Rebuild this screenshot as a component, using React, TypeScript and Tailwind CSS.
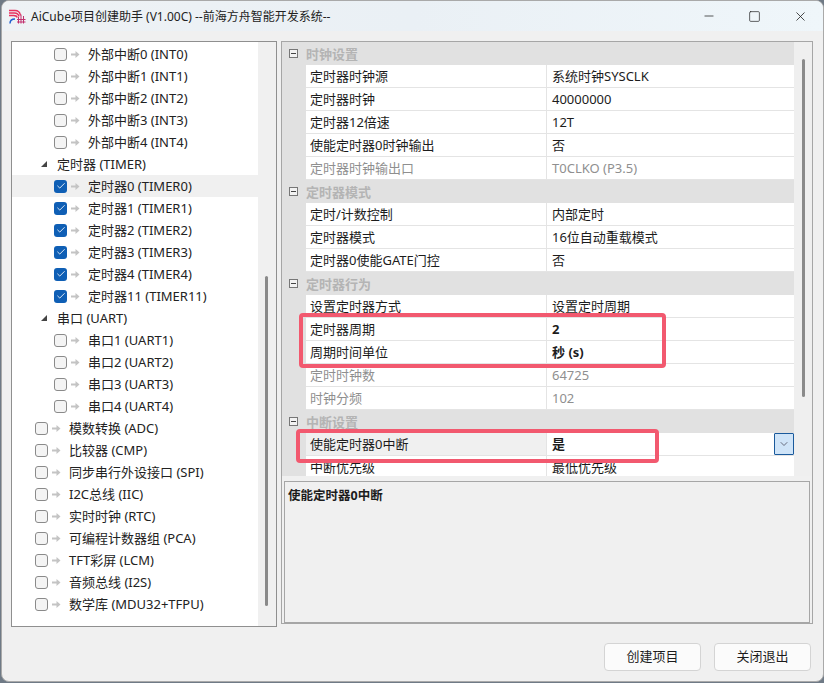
import { Check, Minus, Square, X, ChevronDown } from 'lucide-react';

const font = { fontFamily: '"Noto Sans", "Noto Sans CJK SC", sans-serif' };

type TreeItem = {
  label: string;
  level: 0 | 1 | 2;
  checked?: boolean;
  group?: boolean;
  active?: boolean;
};

const treeItems: TreeItem[] = [
  { label: '外部中断0 (INT0)', level: 2 },
  { label: '外部中断1 (INT1)', level: 2 },
  { label: '外部中断2 (INT2)', level: 2 },
  { label: '外部中断3 (INT3)', level: 2 },
  { label: '外部中断4 (INT4)', level: 2 },
  { label: '定时器 (TIMER)', level: 1, group: true },
  { label: '定时器0 (TIMER0)', level: 2, checked: true, active: true },
  { label: '定时器1 (TIMER1)', level: 2, checked: true },
  { label: '定时器2 (TIMER2)', level: 2, checked: true },
  { label: '定时器3 (TIMER3)', level: 2, checked: true },
  { label: '定时器4 (TIMER4)', level: 2, checked: true },
  { label: '定时器11 (TIMER11)', level: 2, checked: true },
  { label: '串口 (UART)', level: 1, group: true },
  { label: '串口1 (UART1)', level: 2 },
  { label: '串口2 (UART2)', level: 2 },
  { label: '串口3 (UART3)', level: 2 },
  { label: '串口4 (UART4)', level: 2 },
  { label: '模数转换 (ADC)', level: 0 },
  { label: '比较器 (CMP)', level: 0 },
  { label: '同步串行外设接口 (SPI)', level: 0 },
  { label: 'I2C总线 (IIC)', level: 0 },
  { label: '实时时钟 (RTC)', level: 0 },
  { label: '可编程计数器组 (PCA)', level: 0 },
  { label: 'TFT彩屏 (LCM)', level: 0 },
  { label: '音频总线 (I2S)', level: 0 },
  { label: '数学库 (MDU32+TFPU)', level: 0 },
];

type PropRow = { name: string; value: string; disabled?: boolean; bold?: boolean; selected?: boolean };
type PropGroup = { title: string; rows: PropRow[] };

const groups: PropGroup[] = [
  {
    title: '时钟设置',
    rows: [
      { name: '定时器时钟源', value: '系统时钟SYSCLK' },
      { name: '定时器时钟', value: '40000000' },
      { name: '定时器12倍速', value: '12T' },
      { name: '使能定时器0时钟输出', value: '否' },
      { name: '定时器时钟输出口', value: 'T0CLKO (P3.5)', disabled: true },
    ],
  },
  {
    title: '定时器模式',
    rows: [
      { name: '定时/计数控制', value: '内部定时' },
      { name: '定时器模式', value: '16位自动重载模式' },
      { name: '定时器0使能GATE门控', value: '否' },
    ],
  },
  {
    title: '定时器行为',
    rows: [
      { name: '设置定时器方式', value: '设置定时周期' },
      { name: '定时器周期', value: '2', bold: true },
      { name: '周期时间单位', value: '秒 (s)', bold: true },
      { name: '定时时钟数', value: '64725', disabled: true },
      { name: '时钟分频', value: '102', disabled: true },
    ],
  },
  {
    title: '中断设置',
    rows: [
      { name: '使能定时器0中断', value: '是', bold: true, selected: true },
      { name: '中断优先级', value: '最低优先级' },
    ],
  },
];

function Logo() {
  return (
    <svg width="17" height="15" viewBox="0 0 17 15" fill="none" className="shrink-0">
      <path d="M0 1.500h6c3 0 5 2 5.500 5M0 4h5.500c2.500 0 4 1.500 4.500 3.500M0 6.500h4.500c2 0 3.500 1 3.800 2" stroke="#e8305f" strokeWidth="1.300" />
      <path d="M12 5.500v9M14.500 7v7.500M9.500 8v6.500M8 10.500h8.500M8 13h8.500" stroke="#c2316e" strokeWidth="1" />
      <path d="M1 14.500c0-3 2-4.500 5-4.500" stroke="#1f5fd0" strokeWidth="1.500" />
    </svg>
  );
}

function TreeRow({ item }: { item: TreeItem }) {
  const pad = item.level === 2 ? 'pl-[42px]' : item.level === 1 ? 'pl-[29px]' : 'pl-[23px]';
  return (
    <div className={`flex h-[22px] items-center text-[13px] text-[#222] ${pad} ${item.active ? 'bg-[#f0f0f0]' : ''}`}>
      {item.group ? (
        <>
          <span className="mr-[10px] h-0 w-0 border-b-[6px] border-l-[6px] border-b-[#444] border-l-transparent" />
          <span className="pt-[2px]">{item.label}</span>
        </>
      ) : (
        <>
          {item.checked ? (
            <span className="flex h-[13px] w-[13px] items-center justify-center rounded-[3px] bg-[#0f5fb5]">
              <Check size={10} color="#fff" strokeWidth={2} />
            </span>
          ) : (
            <span className="h-[13px] w-[13px] rounded-[3px] border border-[#8a8a8a] bg-[#f4f4f4]" />
          )}
          <svg width="9" height="9" viewBox="0 0 9 9" className="ml-[4px] mr-[8px] shrink-0">
            <path d="M0 3.500h4.500V1l4 3.500-4 3.500V5.500H0z" fill="#c4c4c4" />
          </svg>
          <span className="pt-[2px]">{item.label}</span>
        </>
      )}
    </div>
  );
}

function GroupHeader({ title }: { title: string }) {
  return (
    <div className="flex h-[23px] items-center bg-[#e1e1e1]">
      <span className="flex w-[24px] shrink-0 justify-center pr-[2px]">
        <span className="flex h-[9px] w-[9px] items-center justify-center border border-[#777] bg-[#f2f2f2]">
          <span className="h-px w-[5px] bg-[#444]" />
        </span>
      </span>
      <span className="pt-[2px] text-[13px] font-bold text-[#b4b4b4]">{title}</span>
    </div>
  );
}

function Row({ row }: { row: PropRow }) {
  const color = row.disabled ? 'text-[#8f8f8f]' : 'text-[#1c1c1c]';
  return (
    <div className={`flex h-[23px] text-[13px] ${color}`}>
      <div className="w-[24px] shrink-0 bg-[#e1e1e1]" />
      <div className={`flex w-[241px] shrink-0 items-center border-b border-r border-[#e4e4e4] pl-[4px] pt-[2px] ${row.selected ? 'bg-[#f0f0f0]' : 'bg-white'}`}>
        {row.name}
      </div>
      <div className={`flex flex-1 items-center justify-between border-b border-[#e4e4e4] bg-white pl-[5px] ${row.bold ? 'font-bold' : ''}`}>
        <span className="pt-[2px]">{row.value}</span>
        {row.selected && (
          <span className="flex h-[22px] w-[20px] items-center justify-center rounded-[1px] border border-[#1a5a9c] bg-[#cfe4f8]">
            <ChevronDown size={12} color="#445" strokeWidth={1.500} />
          </span>
        )}
      </div>
    </div>
  );
}

export default function App() {
  return (
    <div className="h-[683px] w-[824px] overflow-hidden bg-[#6f7a86]" style={font}>
      <div className="relative ml-px flex h-[682px] w-[823px] flex-col overflow-hidden rounded-lg border border-[#a9a9a9] bg-[#f0f0f0]">
        {/* title bar */}
        <div className="flex h-[30px] shrink-0 items-center bg-gradient-to-r from-[#eef2f5] via-[#eaf0f5] to-[#eff6fa] pl-[7px] text-[12px] text-[#222]">
          <Logo />
          <span className="ml-[5px] pt-[2px]">AiCube项目创建助手 (V1.00C) --前海方舟智能开发系统--</span>
          <div className="ml-auto flex items-center pr-[15px] text-[#222]">
            <Minus size={14} strokeWidth={1.300} className="mr-[32px]" />
            <Square size={13} strokeWidth={1.300} className="mr-[32px]" />
            <X size={15} strokeWidth={1.300} />
          </div>
        </div>

        {/* main */}
        <div className="flex h-[588px] shrink-0 pl-[9px] pt-[10px]">
          <div className="flex h-[586px] w-[266px] shrink-0 border border-[#8f8f8f] bg-white">
            <div className="w-[246px] shrink-0 pt-px">
              {treeItems.map(item => (
                <TreeRow key={item.label} item={item} />
              ))}
            </div>
            <div className="flex-1 bg-[#f0f0f0] pl-[7px] pt-[234px]">
              <div className="h-[330px] w-[3px] rounded-full bg-[#8a8a8a]" />
            </div>
          </div>

          <div className="ml-[4px] flex h-[583px] w-[532px] shrink-0 flex-col border border-[#a6a6a6]">
            <div className="flex h-[434px] shrink-0 overflow-hidden">
              <div className="w-[512px] shrink-0">
                {groups.map(group => (
                  <div key={group.title}>
                    <GroupHeader title={group.title} />
                    {group.rows.map(row => (
                      <Row key={row.name} row={row} />
                    ))}
                  </div>
                ))}
              </div>
              <div className="flex-1 bg-[#efefef] pl-[8px] pt-[17px]">
                <div className="h-[338px] w-[3px] rounded-full bg-[#8a8a8a]" />
              </div>
            </div>
            <div className="mx-[2px] mt-[5px] h-[142px] border border-[#a6a6a6] bg-[#f0f0f0] px-[3px] pt-[5px] text-[12.5px] font-bold text-[#1c1c1c]">
              使能定时器0中断
            </div>
          </div>
        </div>

        {/* buttons */}
        <div className="flex justify-end gap-[13px] pr-[12px] pt-[24px]">
          <button className="h-[28px] w-[97px] rounded-[4px] border border-[#d4d4d4] bg-[#fbfbfb] text-[13px] text-[#1c1c1c]">创建项目</button>
          <button className="h-[28px] w-[97px] rounded-[4px] border border-[#d4d4d4] bg-[#fbfbfb] text-[13px] text-[#1c1c1c]">关闭退出</button>
        </div>

        {/* red annotations */}
        <div className="absolute left-[297px] top-[312px] h-[55px] w-[367px] rounded-[4px] border-[4px] border-[#f2596f]" />
        <div className="absolute left-[294px] top-[428px] h-[34px] w-[363px] rounded-[4px] border-[4px] border-[#f2596f]" />
      </div>
    </div>
  );
}
